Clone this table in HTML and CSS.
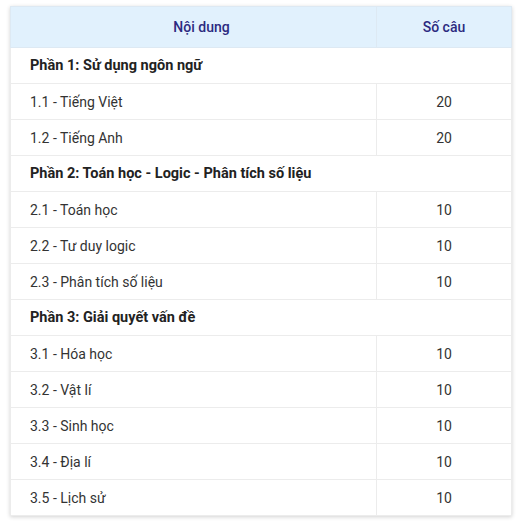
FILE: index.html
```html
<!DOCTYPE html>
<html lang="vi">
<head>
<meta charset="utf-8">
<link rel="stylesheet" href="styles.css">
</head>
<body>
<div class="wrap">
<table class="tbl">
  <thead>
    <tr><th class="c1">Nội dung</th><th class="c2">Số câu</th></tr>
  </thead>
  <tbody>
    <tr class="sec"><td colspan="2">Phần 1: Sử dụng ngôn ngữ</td></tr>
    <tr><td>1.1 - Tiếng Việt</td><td class="num">20</td></tr>
    <tr><td>1.2 - Tiếng Anh</td><td class="num">20</td></tr>
    <tr class="sec"><td colspan="2">Phần 2: Toán học - Logic - Phân tích số liệu</td></tr>
    <tr><td>2.1 - Toán học</td><td class="num">10</td></tr>
    <tr><td>2.2 - Tư duy logic</td><td class="num">10</td></tr>
    <tr><td>2.3 - Phân tích số liệu</td><td class="num">10</td></tr>
    <tr class="sec"><td colspan="2">Phần 3: Giải quyết vấn đề</td></tr>
    <tr><td>3.1 - Hóa học</td><td class="num">10</td></tr>
    <tr><td>3.2 - Vật lí</td><td class="num">10</td></tr>
    <tr><td>3.3 - Sinh học</td><td class="num">10</td></tr>
    <tr><td>3.4 - Địa lí</td><td class="num">10</td></tr>
    <tr><td>3.5 - Lịch sử</td><td class="num">10</td></tr>
  </tbody>
</table>
</div>
</body>
</html>
```
FILE: styles.css
```css
html, body {
  margin: 0;
  padding: 0;
  background: #fff;
}
.wrap {
  padding: 6px 9px 8px 10px;
}
.tbl {
  width: 502px;
  border-collapse: collapse;
  font-family: Roboto, "Liberation Sans", sans-serif;
  font-size: 14px;
  color: #333;
  box-shadow: 0 1px 4px rgba(0, 0, 0, 0.18);
  background: #fff;
}
.tbl th {
  background: #e1f1fd;
  color: #2c2a80;
  font-weight: 500;
  height: 40px;
  padding: 0;
  text-align: center;
  border: 1px solid #dde9f3;
}
.tbl th.c1 {
  width: 349px;
  padding-left: 16px;
}
.tbl td {
  height: 35px;
  padding: 0 0 0 19px;
  border: 1px solid #ececec;
}
.tbl td.num {
  text-align: center;
  padding: 0;
}
.tbl tr.sec td {
  font-weight: 700;
  font-size: 14.5px;
  color: #222;
}
```
